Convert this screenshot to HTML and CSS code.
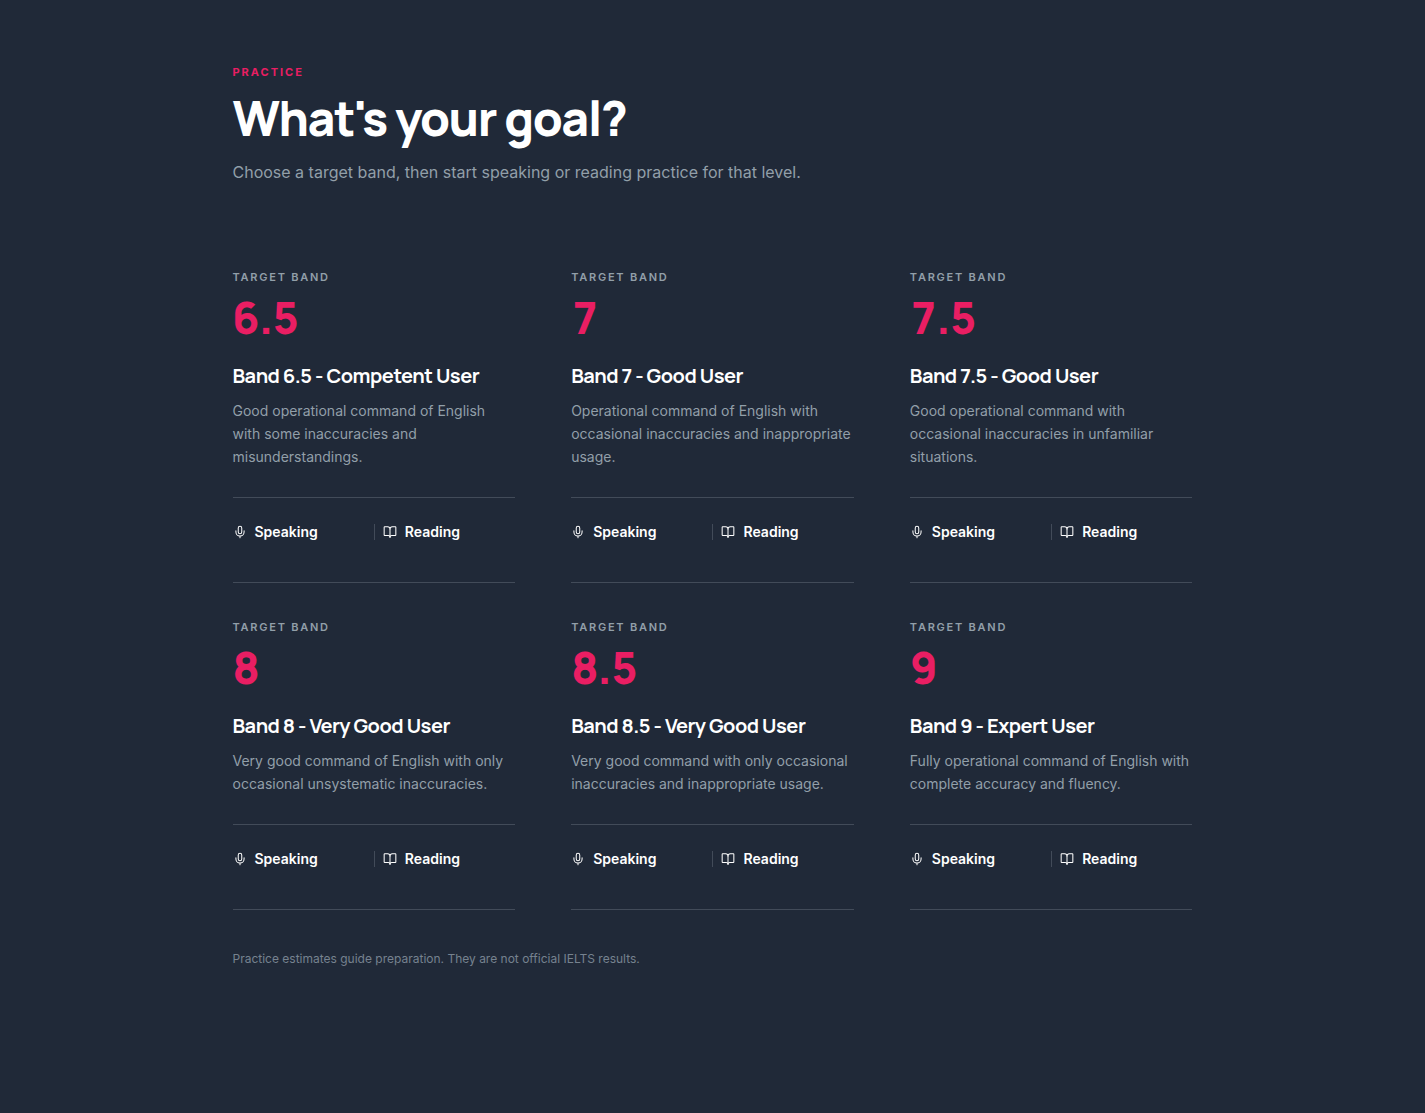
FILE: index.html
```html
<!DOCTYPE html>
<html lang="en">
<head>
<meta charset="utf-8">
<meta name="viewport" content="width=device-width, initial-scale=1">
<title>Practice</title>
<link rel="stylesheet" href="styles.css">
</head>
<body>
<svg class="sprite" aria-hidden="true">
  <symbol id="mic" viewBox="0 0 24 24"><path d="M12 2a3 3 0 0 0-3 3v7a3 3 0 0 0 6 0V5a3 3 0 0 0-3-3Z"/><path d="M19 10v2a7 7 0 0 1-14 0v-2M12 19v3"/></symbol>
  <symbol id="book" viewBox="0 0 24 24"><path d="M12 7v14"/><path d="M3 18a1 1 0 0 1-1-1V4a1 1 0 0 1 1-1h5a4 4 0 0 1 4 4 4 4 0 0 1 4-4h5a1 1 0 0 1 1 1v13a1 1 0 0 1-1 1h-6a3 3 0 0 0-3 3 3 3 0 0 0-3-3z"/></symbol>
</svg>
<main class="page">
  <header class="intro">
    <p class="eyebrow">Practice</p>
    <h1>What's your goal?</h1>
    <p class="lead">Choose a target band, then start speaking or reading practice for that level.</p>
  </header>
  <section class="bands" aria-label="Target bands">
    <article class="band">
      <p class="label">Target band</p>
      <p class="score">6.5</p>
      <h2>Band 6.5 - Competent User</h2>
      <p class="description">Good operational command of English with some inaccuracies and misunderstandings.</p>
      <nav class="actions" aria-label="Band 6.5 practice">
        <a href="#speaking"><svg class="icon"><use href="#mic"/></svg>Speaking</a>
        <a href="#reading"><svg class="icon"><use href="#book"/></svg>Reading</a>
      </nav>
    </article>
    <article class="band">
      <p class="label">Target band</p>
      <p class="score">7</p>
      <h2>Band 7 - Good User</h2>
      <p class="description">Operational command of English with occasional inaccuracies and inappropriate usage.</p>
      <nav class="actions" aria-label="Band 7 practice">
        <a href="#speaking"><svg class="icon"><use href="#mic"/></svg>Speaking</a>
        <a href="#reading"><svg class="icon"><use href="#book"/></svg>Reading</a>
      </nav>
    </article>
    <article class="band">
      <p class="label">Target band</p>
      <p class="score">7.5</p>
      <h2>Band 7.5 - Good User</h2>
      <p class="description">Good operational command with occasional inaccuracies in unfamiliar situations.</p>
      <nav class="actions" aria-label="Band 7.5 practice">
        <a href="#speaking"><svg class="icon"><use href="#mic"/></svg>Speaking</a>
        <a href="#reading"><svg class="icon"><use href="#book"/></svg>Reading</a>
      </nav>
    </article>
    <article class="band">
      <p class="label">Target band</p>
      <p class="score">8</p>
      <h2>Band 8 - Very Good User</h2>
      <p class="description">Very good command of English with only occasional unsystematic inaccuracies.</p>
      <nav class="actions" aria-label="Band 8 practice">
        <a href="#speaking"><svg class="icon"><use href="#mic"/></svg>Speaking</a>
        <a href="#reading"><svg class="icon"><use href="#book"/></svg>Reading</a>
      </nav>
    </article>
    <article class="band">
      <p class="label">Target band</p>
      <p class="score">8.5</p>
      <h2>Band 8.5 - Very Good User</h2>
      <p class="description">Very good command with only occasional inaccuracies and inappropriate usage.</p>
      <nav class="actions" aria-label="Band 8.5 practice">
        <a href="#speaking"><svg class="icon"><use href="#mic"/></svg>Speaking</a>
        <a href="#reading"><svg class="icon"><use href="#book"/></svg>Reading</a>
      </nav>
    </article>
    <article class="band">
      <p class="label">Target band</p>
      <p class="score">9</p>
      <h2>Band 9 - Expert User</h2>
      <p class="description">Fully operational command of English with complete accuracy and fluency.</p>
      <nav class="actions" aria-label="Band 9 practice">
        <a href="#speaking"><svg class="icon"><use href="#mic"/></svg>Speaking</a>
        <a href="#reading"><svg class="icon"><use href="#book"/></svg>Reading</a>
      </nav>
    </article>
  </section>
  <p class="note">Practice estimates guide preparation. They are not official IELTS results.</p>
</main>
</body>
</html>
```
FILE: styles.css
```css
:root {
  --bg: #202938;
  --accent: #e91e63;
  --muted: #929fa9;
  --line: #424b59;
}
* { box-sizing: border-box; }
body {
  margin: 0;
  min-height: 100vh;
  background: var(--bg);
  color: #fff;
  font-family: Inter, "Liberation Sans", sans-serif;
}
h1, h2, p { margin: 0; }
.sprite { display: none; }
.page {
  max-width: 1008px;
  margin: 0 auto;
  padding: 64px 24px 96px;
}
.eyebrow, .label {
  font-size: 11px;
  line-height: 16px;
  font-weight: 600;
  letter-spacing: 0.16em;
  text-transform: uppercase;
}
.eyebrow {
  color: var(--accent);
  font-weight: 700;
  letter-spacing: 0.18em;
}
h1 {
  margin-top: 12px;
  font-family: Manrope, Inter, sans-serif;
  font-size: 48px;
  line-height: 52px;
  font-weight: 800;
  letter-spacing: -0.03em;
}
.lead {
  margin-top: 15px;
  color: var(--muted);
  font-size: 16px;
  line-height: 26px;
}
.bands {
  display: grid;
  grid-template-columns: repeat(auto-fit, minmax(260px, 1fr));
  column-gap: 56px;
  margin-top: 48px;
}
.band {
  display: flex;
  flex-direction: column;
  padding: 36px 0;
  border-bottom: 1px solid var(--line);
}
.label { color: var(--muted); }
.score {
  margin-top: 10px;
  color: var(--accent);
  font-family: Manrope, Inter, sans-serif;
  font-size: 44px;
  line-height: 44px;
  font-weight: 800;
  font-variant-numeric: tabular-nums;
  letter-spacing: -0.02em;
}
h2 {
  margin-top: 24px;
  font-family: Manrope, Inter, sans-serif;
  font-size: 20px;
  line-height: 26px;
  font-weight: 700;
  letter-spacing: -0.025em;
}
.description {
  margin-top: 10px;
  color: var(--muted);
  font-size: 14px;
  line-height: 23px;
}
.actions {
  display: grid;
  grid-template-columns: 1fr 1fr;
  margin-top: 29px;
  padding-top: 26px;
  padding-bottom: 6px;
  border-top: 1px solid var(--line);
}
.actions a {
  display: flex;
  align-items: center;
  gap: 8px;
  height: 16px;
  color: #fff;
  font-size: 14px;
  line-height: 16px;
  font-weight: 600;
  text-decoration: none;
}
.actions a + a {
  padding-left: 8px;
  border-left: 1px solid var(--line);
}
.icon {
  width: 14px;
  height: 14px;
  fill: none;
  stroke: currentColor;
  stroke-width: 1.75;
  stroke-linecap: round;
  stroke-linejoin: round;
}
.note {
  margin-top: 39px;
  color: #76828f;
  font-size: 12px;
  line-height: 20px;
}
```
